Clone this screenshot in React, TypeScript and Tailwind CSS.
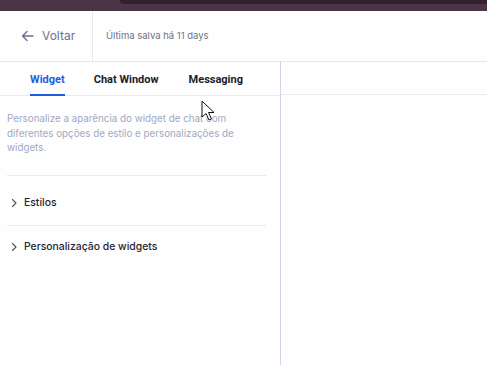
import React from 'react';

const Chevron: React.FC = () => (
  <svg width="7" height="10" viewBox="0 0 7 10" fill="none" className="shrink-0">
    <path d="M1.5 1.5L5 5L1.5 8.5" stroke="#4b5168" strokeWidth="1.1" strokeLinecap="round" strokeLinejoin="round" />
  </svg>
);

const Section: React.FC<{ title: string; first?: boolean }> = ({ title, first }) => (
  <div className={`flex items-start gap-[6px] h-[50px] pl-[4px] border-t border-[#e8e9f0] ${first ? 'pt-[20px]' : 'pt-[14px]'}`}>
    <div className="h-[14px] flex items-center"><Chevron /></div>
    <span className="text-[10.4px] leading-[14px] font-medium text-[#1f2433]">{title}</span>
  </div>
);

export default function App() {
  return (
    <div className="relative w-[487px] h-[365px] overflow-hidden bg-[#fefefe] flex flex-col" style={{ fontFamily: 'Inter, "Noto Sans", sans-serif' }}>
      {/* browser chrome strip */}
      <div className="relative h-[11px] bg-[#4a3446] shrink-0">
        <div className="absolute left-[120px] right-0 top-0 h-[4px] bg-[#33202f] rounded-bl-[6px]" />
      </div>

      {/* header */}
      <div className="flex h-[51px] border-b border-[#e6e7ee] shrink-0">
        <button className="w-[93px] flex items-center gap-[8px] pl-[21px] border-r border-[#e6e7ee] text-[#6b7092]">
          <svg width="13" height="12" viewBox="0 0 13 12" fill="none">
            <path d="M12 6H1.5M6 1.5L1.5 6L6 10.5" stroke="#6b7092" strokeWidth="1.4" strokeLinecap="round" strokeLinejoin="round" />
          </svg>
          <span className="text-[12px]">Voltar</span>
        </button>
        <div className="flex items-center pl-[13px] text-[9.5px] text-[#6e7386]">Última salva há 11 days</div>
      </div>

      <div className="flex flex-1">
        {/* left panel */}
        <div className="w-[281px] border-r border-[#d2d5e3] flex flex-col">
          <div className="flex h-[34px] pt-[3px] border-b border-[#e8e9f0] pl-[30px] gap-[29px] text-[11px] font-bold" style={{ fontFamily: 'Roboto, sans-serif' }}>
            <div className="relative flex items-center text-[#1d5fe0]">
              Widget
              <div className="absolute left-0 right-0 bottom-[-1px] h-[2px] bg-[#1d5fe0]" />
            </div>
            <div className="flex items-center text-[#1a1d29]">Chat Window</div>
            <div className="flex items-center text-[#1a1d29] ml-[1px]">Messaging</div>
          </div>
          <div className="pl-[7px] pr-[14px]">
            <p className="pt-[16px] text-[9.8px] leading-[14.5px] text-[#a2a8c2] w-[232px]">
              Personalize a aparência do widget de chat com diferentes opções de estilo e personalizações de widgets.
            </p>
            <div className="mt-[19px]">
              <Section title="Estilos" first />
              <Section title="Personalização de widgets" />
            </div>
          </div>
        </div>

        {/* right panel */}
        <div className="flex-1 flex flex-col">
          <div className="h-[33px] border-b border-[#e8e9f0]" />
        </div>
      </div>

      {/* mouse cursor */}
      <svg className="absolute left-[201px] top-[100px]" width="15" height="22" viewBox="0 0 15 22">
        <path d="M1 1V17L5 13.5L8 20L10.5 19L7.5 12.5H13L1 1Z" fill="#fff" stroke="#111" strokeWidth="1" strokeLinejoin="round" />
      </svg>
    </div>
  );
}
